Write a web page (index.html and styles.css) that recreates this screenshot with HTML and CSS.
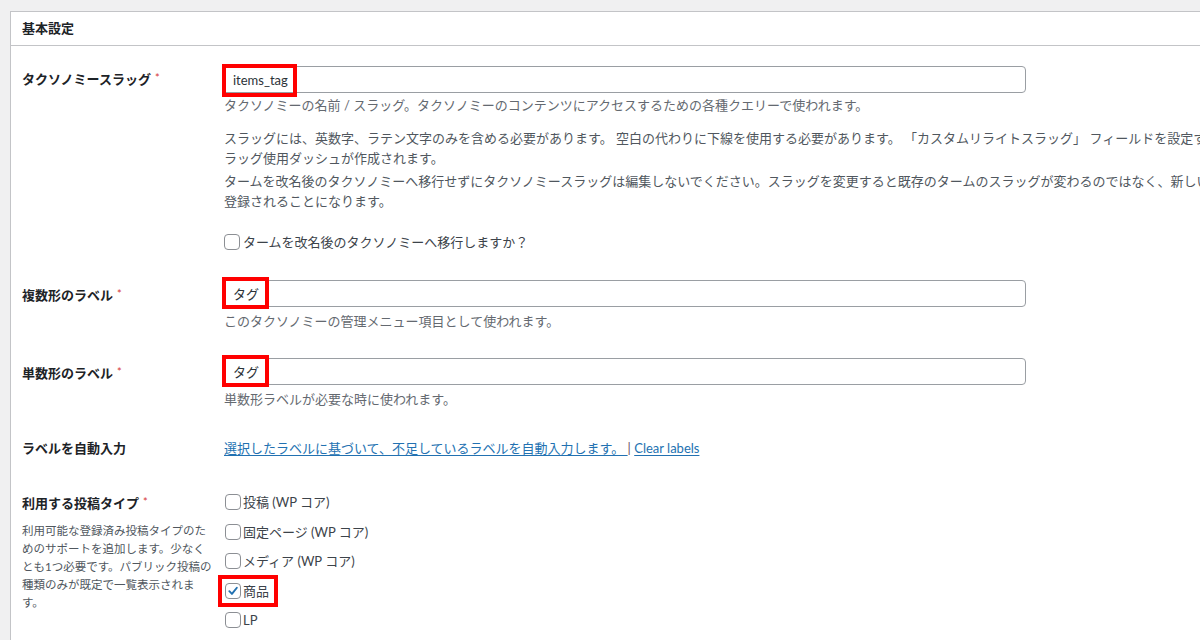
FILE: index.html
```html
<!DOCTYPE html>
<html lang="ja">
<head>
<meta charset="utf-8">
<title>基本設定</title>
<link rel="stylesheet" href="styles.css">
</head>
<body>
<div class="wrap">
  <section class="postbox">
    <h2 class="postbox-title">基本設定</h2>
    <div class="form">

      <div class="row row-slug">
        <div class="label">タクソノミースラッグ<span class="req">*</span></div>
        <div class="field">
          <div class="input-wrap">
            <input class="text" type="text" value="items_tag">
            <span class="mark mark-slug"></span>
          </div>
          <p class="description">タクソノミーの名前 / スラッグ。タクソノミーのコンテンツにアクセスするための各種クエリーで使われます。</p>
          <p class="note">スラッグには、英数字、ラテン文字のみを含める必要があります。 空白の代わりに下線を使用する必要があります。 「カスタムリライトスラッグ」 フィールドを設定すると、スラッグ使用ダッシュが作成されます。</p>
          <p class="note note-next">タームを改名後のタクソノミーへ移行せずにタクソノミースラッグは編集しないでください。スラッグを変更すると既存のタームのスラッグが変わるのではなく、新しいタームが登録されることになります。</p>
          <label class="check check-migrate"><span class="box"></span>タームを改名後のタクソノミーへ移行しますか？</label>
        </div>
      </div>

      <div class="row row-mid">
        <div class="label label-input">複数形のラベル<span class="req">*</span></div>
        <div class="field">
          <div class="input-wrap">
            <input class="text" type="text" value="タグ">
            <span class="mark mark-tag"></span>
          </div>
          <p class="description description-mid">このタクソノミーの管理メニュー項目として使われます。</p>
        </div>
      </div>

      <div class="row row-mid">
        <div class="label label-input">単数形のラベル<span class="req">*</span></div>
        <div class="field">
          <div class="input-wrap">
            <input class="text" type="text" value="タグ">
            <span class="mark mark-tag"></span>
          </div>
          <p class="description description-mid">単数形ラベルが必要な時に使われます。</p>
        </div>
      </div>

      <div class="row row-auto">
        <div class="label">ラベルを自動入力</div>
        <div class="field links">
          <a href="#" class="link">選択したラベルに基づいて、不足しているラベルを自動入力します。 </a><span class="sep"> | </span><a href="#" class="link">Clear labels</a>
        </div>
      </div>

      <div class="row row-types">
        <div class="label">
          <div>利用する投稿タイプ<span class="req">*</span></div>
          <p class="label-desc">利用可能な登録済み投稿タイプのためのサポートを追加します。少なくとも1つ必要です。パブリック投稿の種類のみが既定で一覧表示されます。</p>
        </div>
        <div class="field check-list">
          <label class="check"><span class="box"></span>投稿 (WP コア)</label>
          <label class="check"><span class="box"></span>固定ページ (WP コア)</label>
          <label class="check"><span class="box"></span>メディア (WP コア)</label>
          <label class="check check-marked"><span class="box box-checked"><svg viewBox="0 0 16 16" width="16" height="16"><path d="M3.8 8.2 L6.8 11.3 L12.4 4.3" fill="none" stroke="#2271b1" stroke-width="2.2" stroke-linecap="round" stroke-linejoin="round"/></svg></span>商品<span class="mark mark-check"></span></label>
          <label class="check"><span class="box"></span>LP</label>
        </div>
      </div>

    </div>
  </section>
</div>
</body>
</html>
```

FILE: styles.css
```css
* {
  box-sizing: border-box;
}

html, body {
  margin: 0;
  padding: 0;
}

body {
  background: #f0f0f1;
  font-family: "Lato", "Noto Sans CJK JP", "Noto Sans", sans-serif;
  font-size: 13px;
  color: #3c434a;
  overflow: hidden;
  width: 1200px;
  height: 640px;
}

.wrap {
  padding: 11px 0 0 10px;
}

.postbox {
  width: 1400px;
  background: #fff;
  border: 1px solid #c3c4c7;
}

.postbox-title {
  margin: 0;
  padding: 0 11px;
  font-size: 13px;
  font-weight: 700;
  line-height: 33px;
  color: #1d2327;
  border-bottom: 1px solid #c3c4c7;
}

.form {
  padding-left: 11px;
  padding-bottom: 40px;
}

.row {
  display: grid;
  grid-template-columns: 200px 1fr;
}

.label {
  padding-right: 10px;
  font-weight: 700;
  color: #1d2327;
  line-height: 20px;
}

.req {
  color: #d63638;
  font-size: 11px;
  font-weight: 400;
  vertical-align: 2px;
  margin-left: 4px;
}

.row-slug {
  padding: 20px 0 14px;
}

.row-slug .label {
  line-height: 24px;
}

.row-mid {
  padding: 14px 0;
}

.label-input {
  line-height: 27px;
}

.row-auto {
  padding: 16px 0 14px;
}

.row-types {
  padding-top: 20px;
}

.input-wrap {
  position: relative;
  width: 804px;
}

.text {
  display: block;
  width: 804px;
  height: 27px;
  margin: 0;
  padding: 0 10px;
  border: 1px solid #9a9ea3;
  border-radius: 4px;
  background: #fff;
  font-family: inherit;
  font-size: 13px;
  color: #2c3338;
  outline: none;
}

.mark {
  position: absolute;
  border: 4px solid #ff0000;
  pointer-events: none;
}

.mark-slug {
  left: 0;
  top: -2px;
  width: 75px;
  height: 33px;
}

.mark-tag {
  left: 0;
  top: -3px;
  width: 47px;
  height: 32px;
}

.mark-check {
  left: -7px;
  right: -9px;
  top: -6px;
  bottom: -6px;
}

.description {
  margin: 3px 0 0;
  padding-left: 2px;
  line-height: 18px;
  color: #646970;
}

.description-mid {
  margin-top: 5px;
}

.note {
  margin: 14px 0 0;
  padding-left: 2px;
  width: 1046px;
  line-height: 20px;
  color: #50575e;
}

.note-next {
  margin-top: 3px;
}

.check {
  position: relative;
  display: flex;
  align-items: center;
  height: 20px;
  line-height: 20px;
  color: #3c434a;
}

.check-migrate {
  margin-top: 21px;
  padding-left: 2px;
}

.box {
  flex: none;
  width: 16px;
  height: 16px;
  margin-right: 3px;
  border: 1px solid #8c8f94;
  border-radius: 4px;
  background: #fff;
  display: flex;
  align-items: center;
  justify-content: center;
}

.box svg {
  display: block;
}

.check-list {
  display: grid;
  row-gap: 9.5px;
  justify-items: start;
  padding-left: 3px;
}

.check-list .box {
  margin-right: 2px;
}

.links {
  line-height: 20px;
  padding-left: 2px;
}

.link {
  color: #2271b1;
  text-decoration: underline;
  text-underline-offset: 2px;
}

.sep {
  color: #6b4a5c;
}

.label-desc {
  margin: 9px 0 0;
  width: 192px;
  font-size: 11.5px;
  font-weight: 400;
  line-height: 18px;
  color: #50575e;
}
```
